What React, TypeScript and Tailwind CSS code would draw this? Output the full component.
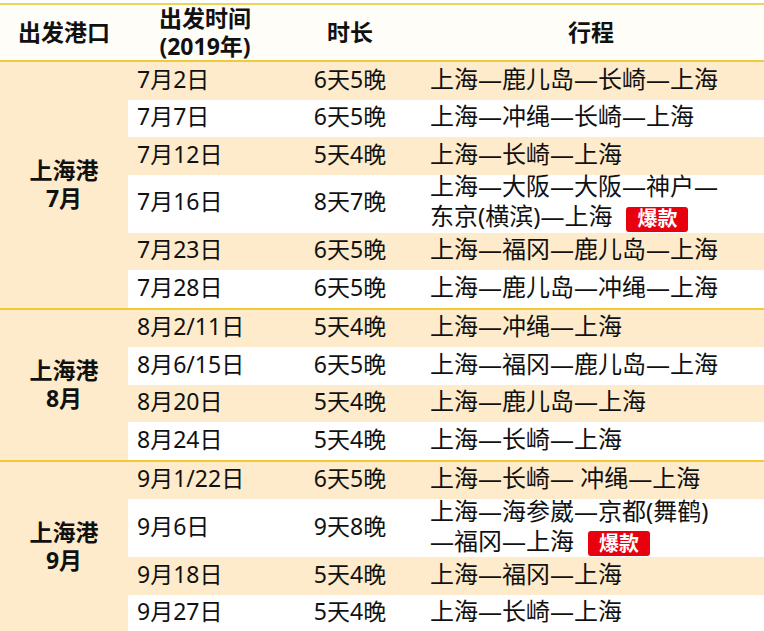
import React from "react";

type Row = {
  date: string;
  days: string;
  route: React.ReactNode;
  tall?: boolean;
};

type Group = { label: string; month: string; rows: Row[] };

const Hot = () => (
  <span className="ml-[14px] inline-flex h-[25px] items-center rounded-[3px] bg-[#e8000e] px-[11px] text-[20px] font-bold leading-none text-white align-middle">
    爆款
  </span>
);

const groups: Group[] = [
  {
    label: "上海港",
    month: "7月",
    rows: [
      { date: "7月2日", days: "6天5晚", route: "上海—鹿儿岛—长崎—上海" },
      { date: "7月7日", days: "6天5晚", route: "上海—冲绳—长崎—上海" },
      { date: "7月12日", days: "5天4晚", route: "上海—长崎—上海" },
      {
        date: "7月16日",
        days: "8天7晚",
        tall: true,
        route: (
          <>
            <div>上海—大阪—大阪—神户—</div>
            <div>
              东京(横滨)—上海
              <Hot />
            </div>
          </>
        ),
      },
      { date: "7月23日", days: "6天5晚", route: "上海—福冈—鹿儿岛—上海" },
      { date: "7月28日", days: "6天5晚", route: "上海—鹿儿岛—冲绳—上海" },
    ],
  },
  {
    label: "上海港",
    month: "8月",
    rows: [
      { date: "8月2/11日", days: "5天4晚", route: "上海—冲绳—上海" },
      { date: "8月6/15日", days: "6天5晚", route: "上海—福冈—鹿儿岛—上海" },
      { date: "8月20日", days: "5天4晚", route: "上海—鹿儿岛—上海" },
      { date: "8月24日", days: "5天4晚", route: "上海—长崎—上海" },
    ],
  },
  {
    label: "上海港",
    month: "9月",
    rows: [
      { date: "9月1/22日", days: "6天5晚", route: "上海—长崎— 冲绳—上海" },
      {
        date: "9月6日",
        days: "9天8晚",
        tall: true,
        route: (
          <>
            <div>上海—海参崴—京都(舞鹤)</div>
            <div>
              —福冈—上海
              <Hot />
            </div>
          </>
        ),
      },
      { date: "9月18日", days: "5天4晚", route: "上海—福冈—上海" },
      { date: "9月27日", days: "5天4晚", route: "上海—长崎—上海" },
    ],
  },
];

export default function App() {
  return (
    <div
      className="w-[764px] h-[631px] overflow-hidden bg-white text-[#111] text-[23px]"
      style={{ fontFamily: '"Noto Sans", "Noto Sans CJK SC", sans-serif' }}
    >
      <div className="mt-[3px] border-t-2 border-[#ecd458]" />
      {/* header */}
      <div className="flex h-[57px] bg-[#fffdf7] font-bold leading-[28px] border-b-2 border-[#eccb3c] pb-[2px]">
        <div className="w-[128px] flex items-center justify-center">出发港口</div>
        <div className="w-[154px] flex flex-col items-center justify-center">
          <div>出发时间</div>
          <div>(2019年)</div>
        </div>
        <div className="w-[136px] flex items-center justify-center">时长</div>
        <div className="flex-1 flex items-center justify-center">行程</div>
      </div>

      {groups.map((g, gi) => (
        <div
          key={gi}
          className={gi > 0 ? "flex border-t-2 border-[#f0c832]" : "flex"}
        >
          <div className="w-[128px] flex flex-col items-center justify-center bg-[#fdebcb] font-bold leading-[28px] pb-[2px]">
            <div>{g.label}</div>
            <div>{g.month}</div>
          </div>
          <div className="flex-1 flex flex-col">
            {g.rows.map((r, i) => (
              <div
                key={i}
                className={
                  (i % 2 === 0 ? "bg-[#fdebcb] " : "bg-white ") +
                  (r.tall ? "h-[58px] " : "h-[37.5px] ") +
                  "flex items-center pb-[4px]"
                }
              >
                <div className="w-[154px] pl-[9px]">{r.date}</div>
                <div className="w-[136px] text-center">{r.days}</div>
                <div className="flex-1 pl-[12px] text-[24px] leading-[30px]">{r.route}</div>
              </div>
            ))}
          </div>
        </div>
      ))}
    </div>
  );
}
